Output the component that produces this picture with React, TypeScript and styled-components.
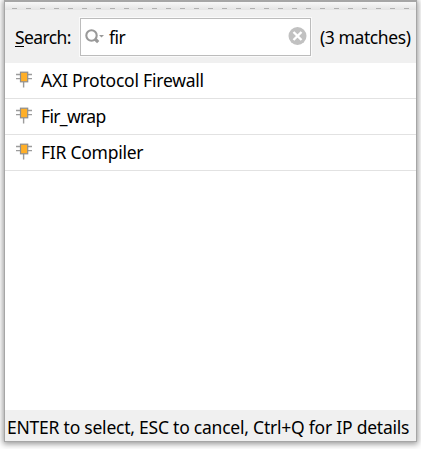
import React from 'react';
import styled, { createGlobalStyle } from 'styled-components';

const GlobalStyle = createGlobalStyle`
  * { box-sizing: border-box; }
  body {
    margin: 0;
    background: #fff;
    overflow: hidden;
    color: #000;
    font: 17.5px/24px "Noto Sans", "Open Sans", sans-serif;
  }
`;

const Page = styled.div`
  width: 421px;
  height: 449px;
  padding: 0 0 0 4px;
  overflow: hidden;
`;

const Popup = styled.div`
  width: 413px;
  height: 442px;
  display: flex;
  flex-direction: column;
  border: 1px solid #a6a6a6;
  border-top-width: 2px;
  background: #fff;
  box-shadow: 0 1px 6px 1px rgba(0, 0, 0, 0.42);
`;

const DragBar = styled.div`
  height: 8px;
  flex: none;
  padding: 6px 0 0 7px;
  background: linear-gradient(#f8f8f8, #e4e4e4);
`;

const Grip = styled.div`
  height: 1px;
  background: repeating-linear-gradient(90deg, #b0b0b0 0 5px, transparent 5px 14px);
`;

const SearchBar = styled.div`
  height: 53px;
  flex: none;
  display: flex;
  align-items: center;
  padding: 0 4px 0 10px;
  background: #f0f0f0;
`;

const Text = styled.span<{ $spacing: number }>`
  white-space: pre;
  letter-spacing: ${p => p.$spacing}px;
`;

const Label = styled.label`
  width: 65px;
  flex: none;
  padding-top: 1px;
`;

const Mnemonic = styled.span`
  text-decoration: underline;
  text-decoration-thickness: 1px;
  text-underline-offset: 2px;
`;

const Field = styled.div`
  width: 231px;
  height: 38px;
  flex: none;
  display: flex;
  align-items: center;
  padding: 0 3px 0 4px;
  border: 1px solid #bcbcbc;
  outline: 1px solid #fafafa;
  background: #fff;
`;

const FieldValue = styled.div`
  flex: 1;
  padding: 1px 0 0 5px;
`;

const Matches = styled.div`
  margin-left: 9px;
  padding-top: 1px;
`;

const List = styled.div`
  flex: 1;
`;

const Row = styled.div`
  height: 36px;
  display: flex;
  align-items: center;
  gap: 9px;
  padding: 0 0 2px 11px;
  border-bottom: 1px solid #e2e2e2;
`;

const Footer = styled.div`
  height: 31px;
  flex: none;
  padding: 5px 0 0 2px;
  background: #f0f0f0;
`;

const SearchIcon = () => (
  <svg width="19" height="18" viewBox="0 0 19 18" fill="none">
    <circle cx="6.5" cy="7.5" r="5.2" stroke="#999" strokeWidth="2.1" />
    <path d="M10 11l3.2 3.2" stroke="#999" strokeWidth="3.2" />
    <path d="M14 7h5l-2.5 2.5z" fill="#999" />
  </svg>
);

const ClearIcon = () => (
  <svg width="19" height="19" viewBox="0 0 19 19">
    <circle cx="9.5" cy="9" r="9" fill="#c1c1c1" />
    <path d="M5.5 5l8 8M13.5 5l-8 8" stroke="#fff" strokeWidth="2.4" />
  </svg>
);

const ChipIcon = () => (
  <svg width="16" height="17" viewBox="0 0 16 17">
    <path d="M0 3.5h16M0 7.6h16M7.6 11v5.5" stroke="#9c9c9c" strokeWidth="1.4" />
    <rect x="4.5" y="1.2" width="7.2" height="9.6" fill="#ffaf28" stroke="#8e8e8e" strokeWidth="1.2" />
  </svg>
);

const RESULTS = [
  { name: 'AXI Protocol Firewall', spacing: -0.22 },
  { name: 'Fir_wrap', spacing: -0.65 },
  { name: 'FIR Compiler', spacing: -0.25 },
];

export default function App() {
  return (
    <Page>
      <GlobalStyle />
      <Popup>
        <DragBar><Grip /></DragBar>
        <SearchBar>
          <Label><Text $spacing={-0.62}><Mnemonic>S</Mnemonic>earch:</Text></Label>
          <Field>
            <SearchIcon />
            <FieldValue><Text $spacing={-0.5}>fir</Text></FieldValue>
            <ClearIcon />
          </Field>
          <Matches><Text $spacing={-0.41}>(3 matches)</Text></Matches>
        </SearchBar>
        <List>
          {RESULTS.map(r => (
            <Row key={r.name}>
              <ChipIcon />
              <Text $spacing={r.spacing}>{r.name}</Text>
            </Row>
          ))}
        </List>
        <Footer><Text $spacing={-0.23}>ENTER to select, ESC to cancel, Ctrl+Q for IP details</Text></Footer>
      </Popup>
    </Page>
  );
}
